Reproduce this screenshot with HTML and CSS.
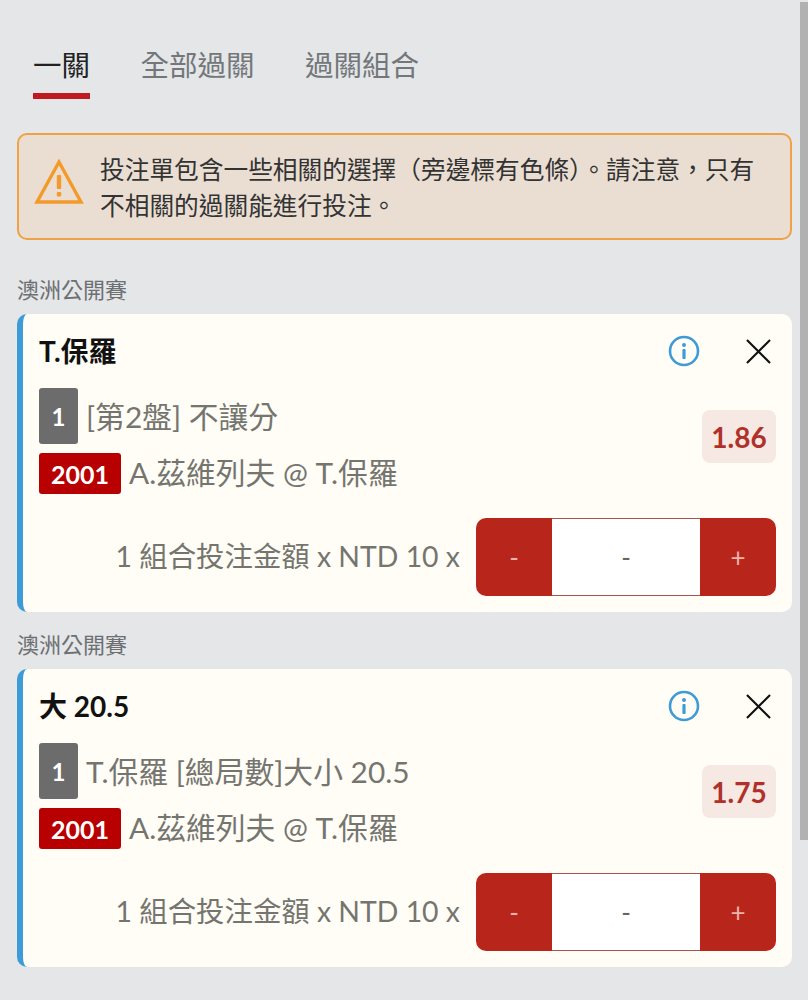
FILE: index.html
```html
<!DOCTYPE html>
<html lang="zh-Hant">
<head>
<meta charset="utf-8">
<title>投注單</title>
<link rel="stylesheet" href="styles.css">
</head>
<body>
<div class="scrollbar"></div>
<nav class="tabs">
  <div class="tab active">一關</div>
  <div class="tab">全部過關</div>
  <div class="tab">過關組合</div>
</nav>
<div class="alert">
  <svg class="alert-icon" viewBox="0 0 50 46" width="50" height="46"><path d="M25 3 L47 43 H3 Z" fill="none" stroke="#f39a2b" stroke-width="3.4" stroke-linejoin="miter"/><rect x="22.8" y="16" width="4.4" height="14" rx="1" fill="#f39a2b"/><rect x="22.8" y="33" width="4.4" height="4.4" rx="1" fill="#f39a2b"/></svg>
  <p class="alert-text">投注單包含一些相關的選擇（旁邊標有色條）。請注意，只有不相關的過關能進行投注。</p>
</div>

<div class="section-label">澳洲公開賽</div>
<section class="card">
  <div class="card-head">
    <div class="card-title">T.保羅</div>
    <svg class="info" viewBox="0 0 32 32" width="32" height="32"><circle cx="16" cy="16" r="14" fill="none" stroke="#3d9bd8" stroke-width="2.6"/><circle cx="16" cy="10" r="2" fill="#3d9bd8"/><rect x="14.4" y="14" width="3.2" height="10" rx="1" fill="#3d9bd8"/></svg>
    <svg class="close" viewBox="0 0 26 26" width="25" height="25"><path d="M1 1 L25 25 M25 1 L1 25" stroke="#111" stroke-width="2.2" fill="none"/></svg>
  </div>
  <div class="card-body">
    <div class="selection">
      <div class="line line-top"><span class="num">1</span><span class="desc">[第2盤] 不讓分</span></div>
      <div class="line line-match"><span class="code">2001</span><span class="desc">A.茲維列夫 @ T.保羅</span></div>
    </div>
    <div class="odds">1.86</div>
  </div>
  <div class="stake-row">
    <span class="stake-label">1 組合投注金額 x NTD 10 x</span>
    <div class="stepper"><div class="step">-</div><div class="value">-</div><div class="step">+</div></div>
  </div>
</section>

<div class="section-label second">澳洲公開賽</div>
<section class="card">
  <div class="card-head">
    <div class="card-title">大 20.5</div>
    <svg class="info" viewBox="0 0 32 32" width="32" height="32"><circle cx="16" cy="16" r="14" fill="none" stroke="#3d9bd8" stroke-width="2.6"/><circle cx="16" cy="10" r="2" fill="#3d9bd8"/><rect x="14.4" y="14" width="3.2" height="10" rx="1" fill="#3d9bd8"/></svg>
    <svg class="close" viewBox="0 0 26 26" width="25" height="25"><path d="M1 1 L25 25 M25 1 L1 25" stroke="#111" stroke-width="2.2" fill="none"/></svg>
  </div>
  <div class="card-body">
    <div class="selection">
      <div class="line line-top"><span class="num">1</span><span class="desc">T.保羅 [總局數]大小 20.5</span></div>
      <div class="line line-match"><span class="code">2001</span><span class="desc">A.茲維列夫 @ T.保羅</span></div>
    </div>
    <div class="odds">1.75</div>
  </div>
  <div class="stake-row">
    <span class="stake-label">1 組合投注金額 x NTD 10 x</span>
    <div class="stepper"><div class="step">-</div><div class="value">-</div><div class="step">+</div></div>
  </div>
</section>
</body>
</html>
```
FILE: styles.css
```css
* { box-sizing: border-box; }
html, body { margin: 0; height: 1000px; overflow: hidden; }
body {
  background: #e4e6e8;
  padding: 0 16px 0 17px;
  font-family: Lato, "Noto Sans CJK TC", sans-serif;
  color: #6f6f6b;
  position: relative;
}
.scrollbar {
  position: absolute; top: 2px; right: 0;
  width: 8px; height: 838px;
  background: #b1b1b1;
}
.tabs { display: flex; gap: 50.5px; padding: 44px 0 0 16px; height: 100px; }
.tab {
  font-size: 28.5px; line-height: 42px; height: 56px;
  color: #73777a; font-weight: 400;
}
.tab.active { color: #222; border-bottom: 6px solid #be1a1f; width: 57px; height: 55px; }
.alert {
  margin-top: 33px;
  height: 107px;
  display: flex; align-items: center;
  padding: 2px 30px 0 15px;
  background: #eaded2;
  border: 2px solid #f0a145;
  border-radius: 10px;
}
.alert-icon { flex: none; margin: 0 16px 11px 0; }
.alert-text { margin: 0; font-size: 24.7px; line-height: 36px; color: #333; }
.section-label { margin-top: 37px; font-size: 22px; line-height: 26px; height: 37px; color: #6d7073; }
.section-label.second { margin-top: 20px; }
.card {
  height: 298px;
  background: #fffdf6;
  border-left: 6px solid #3d9bd8;
  border-radius: 10px;
  padding: 16px 16px 0 16px;
}
.card-head { display: flex; align-items: center; height: 42px; }
.card-title { font-size: 28px; font-weight: 700; color: #111; flex: 1; line-height: 42px; }
.info { margin-right: 46px; }
.close { margin-right: 5px; }
.card-body { display: flex; align-items: flex-start; justify-content: space-between; margin-top: 16px; }
.selection { display: flex; flex-direction: column; gap: 9px; }
.line { display: flex; align-items: center; gap: 8px; }
.line-top .desc { margin-top: 2px; }
.line-match .desc { margin-bottom: 2px; }
.num {
  width: 39px; height: 56px;
  display: flex; align-items: center; justify-content: center;
  background: #6c6c6c; color: #fff; border-radius: 3px;
  font-size: 24px; font-weight: 700;
}
.code {
  width: 82px; height: 41px;
  display: flex; align-items: center; justify-content: center;
  background: #b80000; color: #fff; border-radius: 3px;
  font-size: 25px; font-weight: 700;
}
.desc { font-size: 29.8px; line-height: 38px; color: #757570; }
.odds {
  width: 74px; height: 53px; margin-top: 22px;
  display: flex; align-items: center; justify-content: center;
  background: #f6e8e2; color: #b0302a; border-radius: 8px;
  font-size: 28px; font-weight: 700;
}
.stake-row { display: flex; align-items: center; justify-content: flex-end; gap: 16px; margin-top: 24px; }
.stake-label { font-size: 28.4px; line-height: 40px; margin-bottom: 2px; color: #757570; }
.stepper {
  width: 300px; height: 78px;
  display: flex;
  background: #fff;
  border-radius: 10px;
  overflow: hidden;
}
.step {
  width: 76px;
  display: flex; align-items: center; justify-content: center;
  background: #b8261b; color: #eab4ab;
  font-size: 26px;
}
.value {
  flex: 1;
  display: flex; align-items: center; justify-content: center;
  border-top: 1px solid #a8544c;
  border-bottom: 1px solid #a8544c;
  font-size: 26px; color: #666;
}
```
